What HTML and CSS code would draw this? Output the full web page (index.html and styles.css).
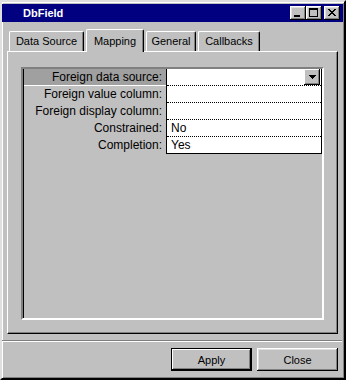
FILE: index.html
```html
<!DOCTYPE html>
<html lang="en">
<head>
  <meta charset="UTF-8" />
  <title>DbField</title>
  <link rel="stylesheet" href="styles.css">
</head>
<body>
  <div class="window">
    <div class="titlebar">
      <span class="title">DbField</span>
      <div class="controls">
        <div class="ctl">
          <svg width="16" height="14" viewBox="0 0 16 14" shape-rendering="crispEdges"><rect x="4" y="9" width="6" height="2" fill="#000"/></svg>
        </div>
        <div class="ctl">
          <svg width="16" height="14" viewBox="0 0 16 14" shape-rendering="crispEdges"><path d="M3 2h9v9h-9z M4 4v6h7v-6z" fill="#000" fill-rule="evenodd"/></svg>
        </div>
        <div class="ctl close-ctl">
          <svg width="16" height="14" viewBox="0 0 16 14" shape-rendering="crispEdges">
            <g fill="#000">
              <rect x="4" y="3" width="2" height="1"/><rect x="10" y="3" width="2" height="1"/>
              <rect x="5" y="4" width="2" height="1"/><rect x="9" y="4" width="2" height="1"/>
              <rect x="6" y="5" width="4" height="1"/>
              <rect x="7" y="6" width="2" height="1"/>
              <rect x="6" y="7" width="4" height="1"/>
              <rect x="5" y="8" width="2" height="1"/><rect x="9" y="8" width="2" height="1"/>
              <rect x="4" y="9" width="2" height="1"/><rect x="10" y="9" width="2" height="1"/>
            </g>
          </svg>
        </div>
      </div>
    </div>

    <div class="content">
      <div class="tabs">
        <div class="tab tab-ds">Data Source</div>
        <div class="tab tab-map active">Mapping</div>
        <div class="tab tab-gen">General</div>
        <div class="tab tab-cb">Callbacks</div>
      </div>

      <div class="panel">
        <div class="grid-box">
          <div class="props">
            <div class="labels">
              <div class="label selected">Foreign data source:</div>
              <div class="label">Foreign value column:</div>
              <div class="label">Foreign display column:</div>
              <div class="label">Constrained:</div>
              <div class="label">Completion:</div>
            </div>
            <div class="values">
              <div class="value">
                <div class="drop">
                  <svg width="7" height="4" viewBox="0 0 7 4" shape-rendering="crispEdges"><path d="M0 0h7v1h-1v1h-1v1h-1v1h-1v-1h-1v-1h-1v-1h-1z" fill="#000"/></svg>
                </div>
              </div>
              <div class="value"></div>
              <div class="value"></div>
              <div class="value">No</div>
              <div class="value last">Yes</div>
            </div>
          </div>
        </div>
      </div>

      <div class="sep"></div>

      <div class="buttons">
        <button class="btn default">Apply</button>
        <button class="btn">Close</button>
      </div>
    </div>
  </div>
</body>
</html>
```

FILE: styles.css
```css
body {
  margin: 0;
  font-family: "Liberation Sans", Arial, sans-serif;
  background: #c0c0c0;
  color: #000;
}
.window {
  width: 346px;
  height: 380px;
  box-sizing: border-box;
  background: #c0c0c0;
  border: 2px solid;
  border-color: #dfdfdf #000 #000 #dfdfdf;
  box-shadow: inset 1px 1px #fff, inset -1px -1px #808080;
  padding: 2px 1px 0 0;
}
.titlebar {
  height: 18px;
  background: #000080;
  color: #fff;
  display: flex;
  align-items: center;
  justify-content: space-between;
  padding: 0 3px 0 21px;
}
.title {
  font-weight: bold;
  font-size: 11px;
}
.controls {
  display: flex;
  align-items: center;
}
.ctl {
  width: 16px;
  height: 14px;
  background: #c0c0c0;
  box-shadow: inset -1px -1px #000, inset 1px 1px #fff, inset -2px -2px #808080, inset 2px 2px #dfdfdf;
}
.ctl svg {
  display: block;
}
.close-ctl {
  margin-left: 2px;
}
.content {
  padding: 7px 5px 0 5px;
}
.tabs {
  display: flex;
  align-items: flex-end;
  gap: 2px;
  padding-left: 2px;
  height: 22px;
}
.tab {
  box-sizing: border-box;
  height: 20px;
  border: 1px solid;
  border-color: #fff #000 transparent #fff;
  border-bottom: none;
  border-radius: 2px 2px 0 0;
  box-shadow: inset -1px 0 #808080;
  font-size: 11px;
  line-height: 18px;
  text-align: center;
  background: #c0c0c0;
}
.tab.active {
  height: 23px;
  padding-top: 2px;
  margin-bottom: -1px;
  position: relative;
  z-index: 1;
}
.tab-ds { width: 75px; }
.tab-map { width: 58px; }
.tab-gen { width: 50px; }
.tab-cb { width: 62px; }
.panel {
  box-sizing: border-box;
  width: 331px;
  height: 283px;
  border: 1px solid;
  border-color: #fff #000 #000 #fff;
  box-shadow: inset -1px -1px #808080;
  padding: 15px 13px 13px 13px;
}
.grid-box {
  box-sizing: border-box;
  height: 253px;
  border: 2px solid;
  border-color: #808080 #fff #fff #808080;
  box-shadow: inset 1px 1px #000;
  padding: 0 0 0 1px;
}
.props {
  display: flex;
}
.labels {
  width: 142px;
}
.label {
  height: 16px;
  border-bottom: 1px solid transparent;
  font-size: 12px;
  line-height: 16px;
  text-align: right;
  padding-right: 4px;
  box-sizing: content-box;
  white-space: nowrap;
}
.label.selected {
  background: #a0a0a0;
  border-bottom-color: #fff;
}
.values {
  flex: 1;
  background: #fff;
  border: 1px solid #000;
  border-top: none;
}
.value {
  height: 16px;
  border-bottom: 1px dotted #000;
  font-size: 12px;
  line-height: 16px;
  padding-left: 4px;
  display: flex;
  justify-content: flex-end;
}
.value:nth-child(n+4) {
  justify-content: flex-start;
}
.value.last {
  border-bottom: none;
}
.drop {
  width: 16px;
  height: 16px;
  box-sizing: border-box;
  background: #c0c0c0;
  box-shadow: inset -1px -1px #000, inset 1px 1px #fff, inset -2px -2px #808080;
  display: flex;
  align-items: center;
  justify-content: center;
  margin-right: 1px;
}
.drop svg {
  display: block;
}
.sep {
  margin: 6px -4px 0 -5px;
  border-top: 1px solid #808080;
  border-bottom: 1px solid #fff;
  height: 0;
}
.buttons {
  display: flex;
  justify-content: flex-end;
  gap: 5px;
  padding: 6px 1px 0 0;
  width: 331px;
}
.btn {
  width: 81px;
  height: 23px;
  font-family: "Liberation Sans", Arial, sans-serif;
  font-size: 11px;
  color: #000;
  background: #c0c0c0;
  border: none;
  box-shadow: inset -1px -1px #000, inset 1px 1px #fff, inset -2px -2px #808080, inset 2px 2px #dfdfdf;
  padding: 0;
}
.btn.default {
  box-shadow: inset 0 0 0 1px #000, inset -2px -2px #000, inset 2px 2px #fff, inset -3px -3px #808080;
}
```
